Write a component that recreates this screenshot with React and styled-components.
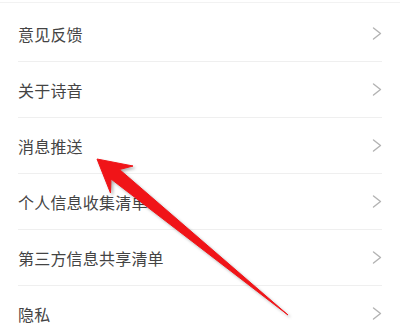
import React from 'react';
import styled, { createGlobalStyle } from 'styled-components';

const GlobalStyle = createGlobalStyle`
  html, body {
    margin: 0;
    padding: 0;
    background: #fff;
  }
  body {
    font-family: "Noto Sans CJK SC", "Noto Sans", sans-serif;
  }
`;

const Page = styled.div`
  position: relative;
  width: 400px;
  height: 336px;
  overflow: hidden;
  background: #fff;
`;

const TopEdge = styled.div`
  height: 2px;
  border-bottom: 1px solid #f2f2f2;
  margin-bottom: 3px;
`;

const List = styled.ul`
  list-style: none;
  margin: 0;
  padding: 0;
`;

const Row = styled.li`
  display: flex;
  align-items: center;
  justify-content: space-between;
  height: 55px;
  margin: 0 18px;
  border-bottom: 1px solid ${(props) => (props.last ? 'transparent' : '#efefef')};
`;

const Label = styled.span`
  font-size: 16px;
  color: #444;
  letter-spacing: 0.2px;
`;

const Chevron = styled.svg`
  width: 10px;
  height: 13px;
  flex-shrink: 0;
`;

const Overlay = styled.svg`
  position: absolute;
  left: 0;
  top: 0;
  width: 400px;
  height: 336px;
  pointer-events: none;
  filter: drop-shadow(2px 2px 1.5px rgba(0, 0, 0, 0.3));
`;

const items = [
  '意见反馈',
  '关于诗音',
  '消息推送',
  '个人信息收集清单',
  '第三方信息共享清单',
  '隐私',
];

function ArrowRight() {
  return (
    <Chevron viewBox="0 0 10 13">
      <polyline
        points="1.5,1 8.5,6.5 1.5,12"
        fill="none"
        stroke="#b3b3b3"
        strokeWidth="1.4"
        strokeLinecap="round"
        strokeLinejoin="round"
      />
    </Chevron>
  );
}

export default function App() {
  return (
    <Page>
      <GlobalStyle />
      <TopEdge />
      <List>
        {items.map((item, i) => (
          <Row key={item} last={i === items.length - 1}>
            <Label>{item}</Label>
            <ArrowRight />
          </Row>
        ))}
      </List>
      {/* red pointer arrow */}
      <Overlay viewBox="0 0 400 336">
        <polygon
          points="97,159 133,166 119.5,169.5 288,315 111,179 110.5,193"
          fill="#f01418"
          stroke="#f01418"
          strokeWidth="1"
          strokeLinejoin="round"
        />
      </Overlay>
    </Page>
  );
}
